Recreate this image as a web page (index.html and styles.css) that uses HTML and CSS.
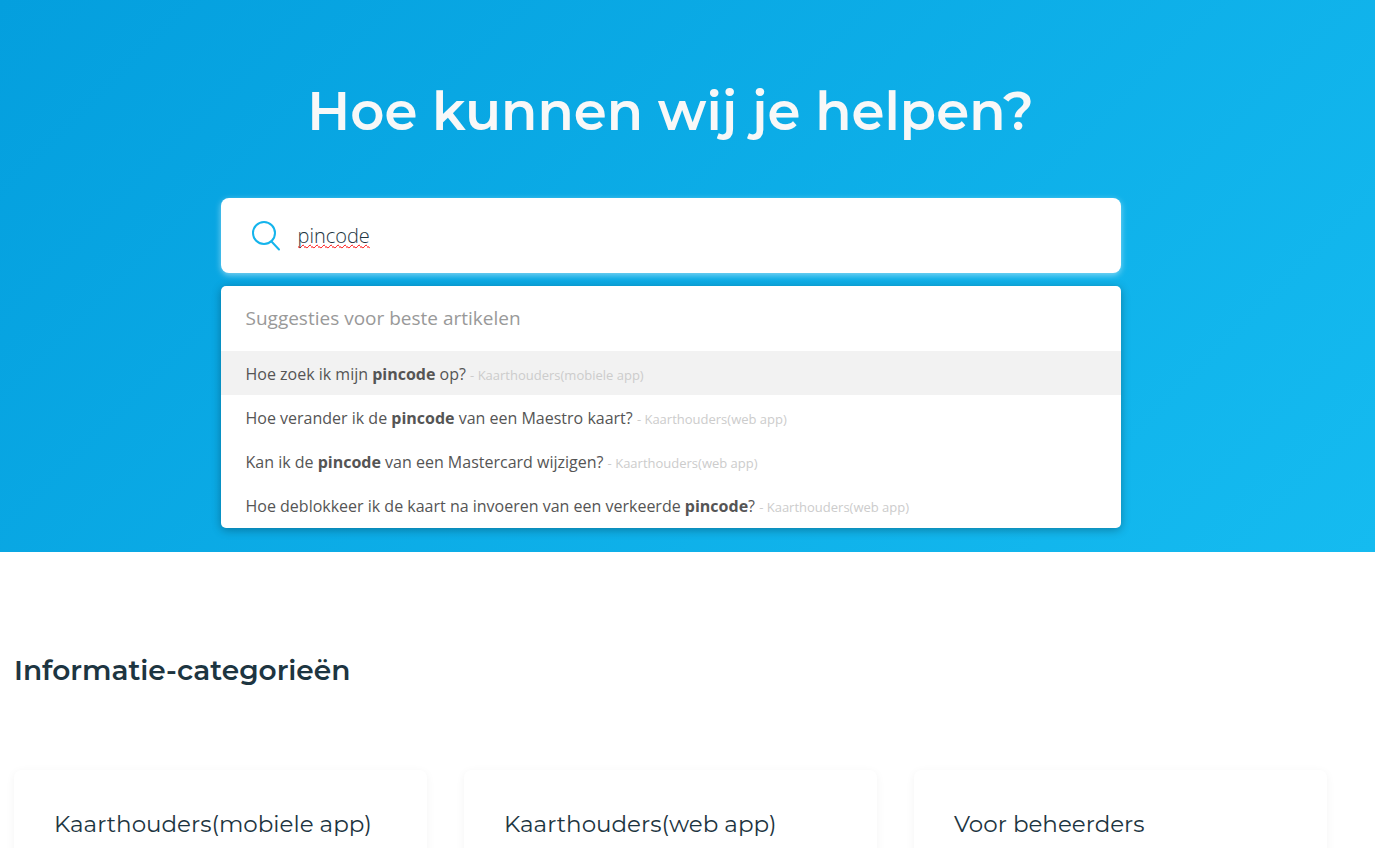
FILE: index.html
```html
<!DOCTYPE html>
<html lang="nl">
<head>
  <meta charset="UTF-8">
  <meta name="viewport" content="width=device-width, initial-scale=1.0">
  <title>Helpcentrum</title>
  <link rel="stylesheet" href="styles.css">
</head>
<body>
  <!-- Search Section -->
  <header class="hero">
    <h1>Hoe kunnen wij je helpen?</h1>

    <form class="search" role="search">
      <label class="search-box" for="query" aria-label="Zoeken">
        <svg class="search-icon" width="30" height="32" viewBox="0 0 30 32" fill="none" stroke="#14b4ec" stroke-width="2" stroke-linecap="round" aria-hidden="true">
          <circle cx="13" cy="13" r="11" />
          <path d="M20.5 21.5 L28 29.5" />
        </svg>
        <input type="text" id="query" class="search-input" value="pincode" autocomplete="off">
      </label>

      <div class="suggestions">
        <h2>Suggesties voor beste artikelen</h2>
        <ul>
          <li class="active"><a href="#">Hoe zoek ik mijn <strong>pincode</strong> op? <span>- Kaarthouders(mobiele app)</span></a></li>
          <li><a href="#">Hoe verander ik de <strong>pincode</strong> van een Maestro kaart? <span>- Kaarthouders(web app)</span></a></li>
          <li><a href="#">Kan ik de <strong>pincode</strong> van een Mastercard wijzigen? <span>- Kaarthouders(web app)</span></a></li>
          <li><a href="#">Hoe deblokkeer ik de kaart na invoeren van een verkeerde <strong>pincode</strong>? <span>- Kaarthouders(web app)</span></a></li>
        </ul>
      </div>
    </form>
  </header>

  <!-- Categories Section -->
  <main class="categories">
    <h2>Informatie-categorieën</h2>
    <div class="cards">
      <a class="card" href="#">Kaarthouders(mobiele app)</a>
      <a class="card" href="#">Kaarthouders(web app)</a>
      <a class="card" href="#">Voor beheerders</a>
    </div>
  </main>
</body>
</html>
```

FILE: styles.css
```css
* {
  box-sizing: border-box;
}

body {
  margin: 0;
  font-family: 'Open Sans', sans-serif;
  background-color: #fff;
  color: #1d3541;
}

h1,
h2,
ul {
  margin: 0;
  padding: 0;
}

a {
  color: inherit;
  text-decoration: none;
}

.hero {
  padding: 79px 48px 24px 14px;
  background: linear-gradient(135deg, #049fde 0%, #15bbf0 100%);
}

.hero h1 {
  margin-bottom: 55px;
  font-family: 'Montserrat', 'Inter', sans-serif;
  font-size: 53px;
  font-weight: 600;
  line-height: 64px;
  text-align: center;
  color: #f8f8f8;
}

.search {
  max-width: 900px;
  margin: 0 auto;
}

.search-box {
  display: flex;
  align-items: center;
  gap: 17px;
  height: 75px;
  padding: 0 30px;
  background-color: #fff;
  border-radius: 8px;
  box-shadow: 0 2px 6px rgba(255, 255, 255, 0.5);
}

.search-icon {
  flex: none;
}

.search-input {
  flex: 1;
  min-width: 0;
  padding: 0;
  border: none;
  outline: none;
  background: transparent;
  font-family: 'Open Sans', sans-serif;
  font-size: 20px;
  font-weight: 300;
  line-height: 28px;
  color: #1d3541;
  text-decoration: underline wavy #f00 1px;
  text-decoration-skip-ink: none;
}

.suggestions {
  margin-top: 13px;
  padding-bottom: 1px;
  overflow: hidden;
  background-color: #fff;
  border-radius: 5px;
  box-shadow: 0 2px 10px rgba(0, 0, 0, 0.3);
}

.suggestions h2 {
  padding: 0 25px;
  font-size: 19px;
  font-weight: 400;
  line-height: 65px;
  color: #999;
}

.suggestions ul {
  list-style: none;
}

.suggestions a {
  display: block;
  padding: 11px 25px 9px;
  font-size: 16px;
  line-height: 24px;
  color: #555;
}

.suggestions .active {
  background-color: #f2f2f2;
}

.suggestions span {
  font-size: 13px;
  line-height: 16px;
  color: #ccc;
}

.categories {
  padding: 100px 48px 0 14px;
  font-family: 'Montserrat', 'Inter', sans-serif;
}

.categories h2 {
  margin-bottom: 82px;
  font-size: 28px;
  font-weight: 600;
  line-height: 36px;
}

.cards {
  display: grid;
  grid-template-columns: repeat(3, 1fr);
  gap: 37px;
}

.card {
  padding: 40px;
  font-size: 23px;
  line-height: 28px;
  border-radius: 8px;
  box-shadow: 0 2px 10px rgba(0, 0, 0, 0.05);
}
```
